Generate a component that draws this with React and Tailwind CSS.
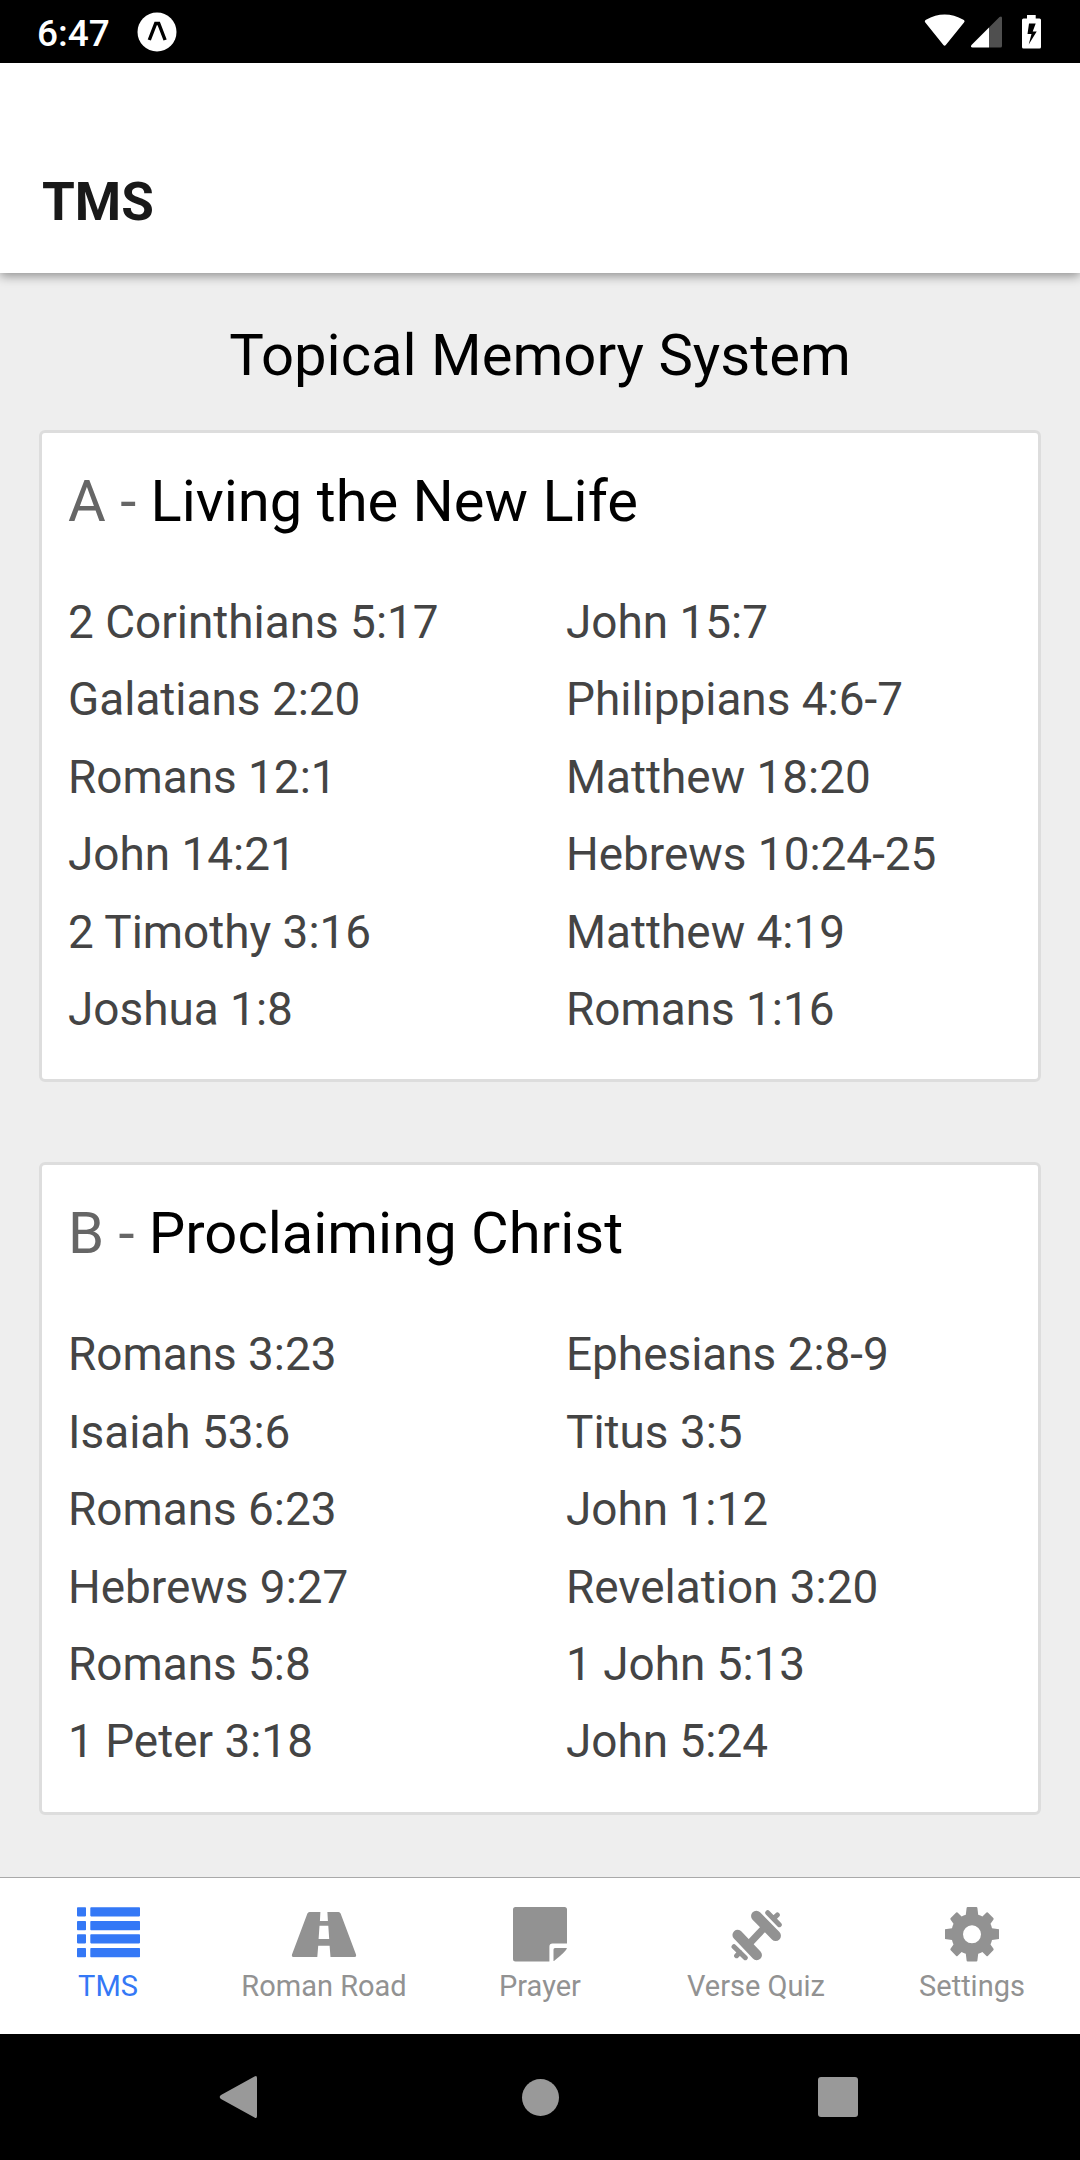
import React from 'react';

const sections = [
  {
    letter: 'A',
    title: 'Living the New Life',
    left: ['2 Corinthians 5:17', 'Galatians 2:20', 'Romans 12:1', 'John 14:21', '2 Timothy 3:16', 'Joshua 1:8'],
    right: ['John 15:7', 'Philippians 4:6-7', 'Matthew 18:20', 'Hebrews 10:24-25', 'Matthew 4:19', 'Romans 1:16'],
  },
  {
    letter: 'B',
    title: 'Proclaiming Christ',
    left: ['Romans 3:23', 'Isaiah 53:6', 'Romans 6:23', 'Hebrews 9:27', 'Romans 5:8', '1 Peter 3:18'],
    right: ['Ephesians 2:8-9', 'Titus 3:5', 'John 1:12', 'Revelation 3:20', '1 John 5:13', 'John 5:24'],
  },
];

const ListIcon = () => (
  <svg className="w-[66px] h-[66px]" viewBox="0 0 66 66" fill="currentColor">
    {[8.2, 22, 35.2, 49].map((y) => (
      <g key={y}>
        <rect x="2" y={y} width="9" height="9.2" rx="0.8" />
        <rect x="15.3" y={y} width="49.7" height="9.2" rx="0.8" />
      </g>
    ))}
  </svg>
);

const RoadIcon = () => (
  <svg className="w-[66px] h-[66px]" viewBox="0 0 66 66" fill="currentColor">
    <path d="M18.5 13H29.4L28.9 22H36.9L36.4 13H47.5Q49 13 49.6 14.5L65 55.5Q65.6 58 63.5 58H39.5L38.6 46.8H27.2L26.3 58H2.5Q.4 58 1 55.5L16.4 14.5Q17 13 18.5 13ZM28.5 26.7L27.6 40H38.2L37.3 26.7Z" />
  </svg>
);

const NoteIcon = () => (
  <svg className="w-[66px] h-[66px]" viewBox="0 0 66 66" fill="currentColor">
    <path d="M8.5 8H57.5Q60 8 60 10.5V44.6H45.5Q42.4 44.6 42.4 47.7V62.5H8.5Q6 62.5 6 60V10.5Q6 8 8.5 8Z" />
    <path d="M46.5 62V50.5Q46.5 49 48 49H60Q59.5 52 47 62Z" />
  </svg>
);

const DumbbellIcon = () => (
  <svg className="w-[66px] h-[66px]" viewBox="0 0 66 66" fill="none" stroke="currentColor" strokeLinecap="round">
    <path d="M33.3 17L52.7 36.7M14.7 36L33.7 56" strokeWidth="10.5" />
    <path d="M25.5 45.5L42.5 27.5" strokeWidth="7" strokeLinecap="butt" />
    <path d="M44.7 13.7L56.3 25.7M11 47.7L22.3 58.7M50.7 19.3L54.3 16M17 53.3L13.6 56.7" strokeWidth="5" />
  </svg>
);

const GearIcon = () => (
  <svg className="w-[66px] h-[66px]" viewBox="0 0 66 66" fill="currentColor">
    <path
      fillRule="evenodd"
      d="M28.6 8H37.4Q38.3 8 38.4 9L39.2 15.8Q41.5 16.5 43.4 17.6L47.5 13.5Q48.1 12.9 48.8 13.5L54.3 19Q55 19.7 54.5 20.5L51.5 24.8Q52.5 27 53 29.3L60 30.3V40L53 41Q52.5 43.3 51.5 45.5L54.5 49.7Q55 50.5 54.3 51.2L48.8 56.9Q48.1 57.5 47.5 56.9L43.4 53Q41.5 54.1 39.2 54.8L38.4 61.5Q38.3 62.5 37.4 62.5H28.6Q27.7 62.5 27.6 61.5L26.8 54.8Q24.5 54.1 22.6 53L18.5 56.9Q17.9 57.5 17.2 56.9L11.7 51.2Q11 50.5 11.5 49.7L14.5 45.5Q13.5 43.3 13 41L6 40V30.3L13 29.3Q13.5 27 14.5 24.8L11.5 20.5Q11 19.7 11.7 19L17.2 13.5Q17.9 12.9 18.5 13.5L22.6 17.6Q24.5 16.5 26.8 15.8L27.6 9Q27.7 8 28.6 8ZM33 26.3A9 9 0 1 0 33 44.3A9 9 0 1 0 33 26.3Z"
    />
  </svg>
);

const tabs = [
  { label: 'TMS', icon: ListIcon, active: true },
  { label: 'Roman Road', icon: RoadIcon },
  { label: 'Prayer', icon: NoteIcon },
  { label: 'Verse Quiz', icon: DumbbellIcon },
  { label: 'Settings', icon: GearIcon },
];

const StatusBar = () => (
  <div className="h-[63px] shrink-0 bg-black text-white flex items-center justify-between pl-[37px] pr-[38px]">
    <div className="flex items-center">
      <span className="w-[100px] text-[37px] leading-[44px] font-medium pt-1">6:47</span>
      <svg className="w-10 h-10" viewBox="0 0 40 40">
        <circle cx="20" cy="20" r="19.5" fill="white" />
        <path d="M12.3 28L18.7 11.5H21.7L28.1 28" fill="none" stroke="black" strokeWidth="3.4" />
      </svg>
    </div>
    <svg className="w-[118px] h-9" viewBox="0 0 118 36" fill="white">
      <path d="M1.3 8.5Q0 7 2 5.8Q20.6-4.6 39.4 5.8Q41.4 7 40 8.5L21.8 31Q20.6 32.3 19.4 31Z" />
      <path d="M65 13.5V33.5H48.5Q46 33 47.5 31Z" />
      <path d="M65 13.5L75.5 3Q78 1.5 78 4V32Q78 33.5 76.5 33.5H65Z" fill="#4f4f4f" />
      <path fillRule="evenodd" d="M103 1H111.7V4.5H115.5Q117 4.5 117 6V33Q117 34.5 115.5 34.5H99.5Q98 34.5 98 33V6Q98 4.5 99.5 4.5H103ZM105 9.5L103.5 20H107.5L104.7 30.5L112.7 17.5H108.7L111.7 9.5Z" />
    </svg>
  </div>
);

const VerseColumn = ({ verses }) => (
  <div className="w-1/2 px-[26px]">
    {verses.map((verse) => (
      <p key={verse} className="text-[45.9px] leading-[77.4px] whitespace-nowrap text-[#444]">{verse}</p>
    ))}
  </div>
);

const SectionCard = ({ section }) => (
  <div className="h-[652.4px] shrink-0 bg-white border-[3px] border-[#ddd] rounded-[6px]">
    <h3 className="px-[26px] pt-[34px] text-[57.9px] leading-[68px] text-black">
      <span className="text-[#666]">{section.letter} - </span>
      {section.title}
    </h3>
    <div className="flex pt-[49px]">
      <VerseColumn verses={section.left} />
      <VerseColumn verses={section.right} />
    </div>
  </div>
);

const App = () => {
  return (
    <div className="w-[1080px] h-[2160px] flex flex-col overflow-hidden bg-[#eee] font-['Roboto',sans-serif]">
      <StatusBar />

      {/* Header */}
      <header className="relative h-[210px] shrink-0 bg-white px-[42px] pt-[108px] shadow-[0_3px_10px_rgba(0,0,0,0.4)]">
        <h1 className="text-[53px] leading-[62px] font-bold text-[#191919]">TMS</h1>
      </header>

      {/* Verse lists */}
      <main className="flex-1 min-h-0 px-[39px]">
        <h2 className="pt-[48px] pb-[41px] text-center text-[58px] leading-[68px] text-black">Topical Memory System</h2>
        <div className="flex flex-col gap-[80px]">
          {sections.map((section) => (
            <SectionCard key={section.letter} section={section} />
          ))}
        </div>
      </main>

      {/* Tab bar */}
      <nav className="h-[157px] shrink-0 bg-white border-t border-[#a9a9a9] grid grid-cols-5">
        {tabs.map(({ label, icon: Icon, active }) => (
          <div
            key={label}
            className={`flex flex-col items-center gap-1 pt-[21px] ${active ? 'text-[#3478f6]' : 'text-[#929292]'}`}
          >
            <Icon />
            <span className="text-[29px] leading-[34px] whitespace-nowrap">{label}</span>
          </div>
        ))}
      </nav>

      {/* Android navigation */}
      <div className="h-[126px] shrink-0 bg-black flex items-center pl-[219px]">
        <svg className="w-[39px] h-11" viewBox="0 0 39 44" fill="#999">
          <path d="M35.5 1.5Q38 0 38 3V41Q38 44 35.5 42.5L2 24Q-0.6 22 2 20Z" />
        </svg>
        <div className="ml-[264px] w-[37px] h-[37px] rounded-full bg-[#999]" />
        <div className="ml-[259px] w-10 h-10 rounded-[3px] bg-[#999]" />
      </div>
    </div>
  );
};

export default App;
